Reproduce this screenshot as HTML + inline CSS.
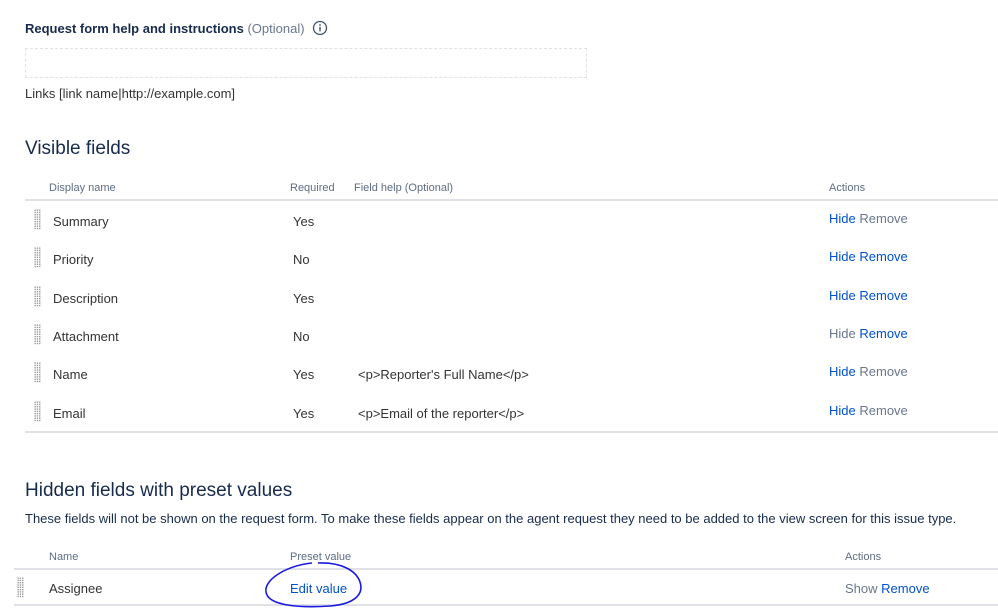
<!DOCTYPE html>
<html><head><meta charset="utf-8"><style>
body{margin:0;width:998px;height:610px;background:#fff;font-family:"Liberation Sans",sans-serif;color:#172b4d;position:relative;overflow:hidden}
.a{position:absolute;white-space:nowrap}
.t{font-size:13px;color:#333}
.h{font-size:11px;color:#5e6c84}
.b{color:#0052cc}.g{color:#6b778c}
.hd{position:absolute;width:7px;height:21px;background-image:radial-gradient(#999 0.7px,transparent 0.9px);background-size:2.3px 2.3px}
.ln{position:absolute;left:25px;right:0;height:2px;background:#dfe1e6}
</style></head><body>
<div class="a" style="left:25px;top:21px;font-size:13px;font-weight:bold">Request form help and instructions <span style="font-weight:normal;color:#6b778c">(Optional)</span></div>
<svg class="a" style="left:312px;top:20px" width="16" height="16" viewBox="0 0 16 16"><circle cx="8" cy="8" r="6.5" fill="none" stroke="#42526e" stroke-width="1.3"/><circle cx="8" cy="5" r="0.9" fill="#42526e"/><rect x="7.3" y="6.8" width="1.4" height="4.6" fill="#42526e"/></svg>
<div class="a" style="left:25px;top:48px;width:560px;height:28px;border:1px dashed #dfe1e6"></div>
<div class="a t" style="left:25px;top:86px">Links [link name|http://example.com]</div>
<div class="a" style="left:25px;top:138px;font-size:19px;color:#172b4d">Visible fields</div>
<div class="a h" style="left:49px;top:182px">Display name</div>
<div class="a h" style="left:290px;top:182px">Required</div>
<div class="a h" style="left:354px;top:182px">Field help (Optional)</div>
<div class="a h" style="left:829px;top:182px">Actions</div>
<div class="ln" style="top:199px"></div>
<div class="ln" style="top:431px"></div>

<div class="hd" style="left:34px;top:209px"></div><div class="a t" style="left:53px;top:214px">Summary</div><div class="a t" style="left:293px;top:214px">Yes</div><div class="a t" style="left:829px;top:211px"><span class="b">Hide</span> <span class="g">Remove</span></div>
<div class="hd" style="left:34px;top:247px"></div><div class="a t" style="left:53px;top:252px">Priority</div><div class="a t" style="left:293px;top:252px">No</div><div class="a t" style="left:829px;top:249px"><span class="b">Hide</span> <span class="b">Remove</span></div>
<div class="hd" style="left:34px;top:286px"></div><div class="a t" style="left:53px;top:291px">Description</div><div class="a t" style="left:293px;top:291px">Yes</div><div class="a t" style="left:829px;top:288px"><span class="b">Hide</span> <span class="b">Remove</span></div>
<div class="hd" style="left:34px;top:324px"></div><div class="a t" style="left:53px;top:329px">Attachment</div><div class="a t" style="left:293px;top:329px">No</div><div class="a t" style="left:829px;top:326px"><span class="g">Hide</span> <span class="b">Remove</span></div>
<div class="hd" style="left:34px;top:362px"></div><div class="a t" style="left:53px;top:367px">Name</div><div class="a t" style="left:293px;top:367px">Yes</div><div class="a t" style="left:358px;top:367px">&lt;p&gt;Reporter's Full Name&lt;/p&gt;</div><div class="a t" style="left:829px;top:364px"><span class="b">Hide</span> <span class="g">Remove</span></div>
<div class="hd" style="left:34px;top:401px"></div><div class="a t" style="left:53px;top:406px">Email</div><div class="a t" style="left:293px;top:406px">Yes</div><div class="a t" style="left:358px;top:406px">&lt;p&gt;Email of the reporter&lt;/p&gt;</div><div class="a t" style="left:829px;top:403px"><span class="b">Hide</span> <span class="g">Remove</span></div>

<div class="a" style="left:25px;top:480px;font-size:19px">Hidden fields with preset values</div>
<div class="a" style="left:25px;top:511px;font-size:13px;color:#172b4d">These fields will not be shown on the request form. To make these fields appear on the agent request they need to be added to the view screen for this issue type.</div>
<div class="a h" style="left:49px;top:551px">Name</div>
<div class="a h" style="left:290px;top:551px">Preset value</div>
<div class="a h" style="left:845px;top:551px">Actions</div>
<div class="ln" style="left:14px;top:568px"></div>
<div class="ln" style="left:14px;top:604px"></div>
<div class="hd" style="left:17px;top:577px"></div><div class="a t" style="left:49px;top:581px">Assignee</div>
<div class="a t b" style="left:290px;top:581px">Edit value</div>
<div class="a t" style="left:845px;top:581px"><span class="g">Show</span> <span class="b">Remove</span></div>
<svg class="a" style="left:260px;top:560px" width="110" height="50" viewBox="0 0 110 50"><path d="M52 3 C25 6 4 20 6 32 C8 46 40 48 70 46 C95 44 104 34 100 22 C96 10 80 2 58 3" fill="none" stroke="#1a1ae0" stroke-width="1.6"/></svg>
</body></html>
